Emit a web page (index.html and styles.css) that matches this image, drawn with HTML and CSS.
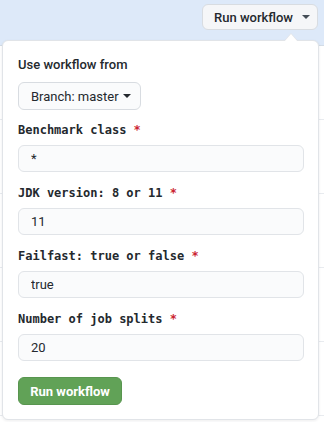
FILE: index.html
```html
<!DOCTYPE html>
<html lang="en">
  <head>
    <meta charset="UTF-8" />
    <meta name="viewport" content="width=device-width, initial-scale=1.0" />
    <title>Run workflow</title>
    <link rel="stylesheet" href="styles.css">
  </head>
  <body>
    <div class="banner">
      <button class="btn btn-run">Run workflow <span class="caret"></span></button>
    </div>

    <div class="runs">
      <div class="run-row"></div>
      <div class="run-row"></div>
      <div class="run-row"></div>
      <div class="run-row"></div>
      <div class="run-row"></div>
    </div>

    <div class="menu">
      <form class="menu-body">
        <p class="menu-title">Use workflow from</p>
        <button type="button" class="btn btn-branch">Branch: master <span class="caret"></span></button>

        <div class="field">
          <label for="benchmark">Benchmark class <span class="req">*</span></label>
          <input type="text" id="benchmark" value="*" />
        </div>

        <div class="field">
          <label for="jdk">JDK version: 8 or 11 <span class="req">*</span></label>
          <input type="text" id="jdk" value="11" />
        </div>

        <div class="field">
          <label for="failfast">Failfast: true or false <span class="req">*</span></label>
          <input type="text" id="failfast" value="true" />
        </div>

        <div class="field">
          <label for="splits">Number of job splits <span class="req">*</span></label>
          <input type="text" id="splits" value="20" />
        </div>

        <button type="button" class="btn btn-primary">Run workflow</button>
      </form>
    </div>
  </body>
</html>
```

FILE: styles.css
```css
body {
  margin: 0;
  font-family: Roboto, "Liberation Sans", Arial, sans-serif;
  font-size: 13px;
  color: #24292e;
  background: #fff;
  position: relative;
  height: 422px;
  overflow: hidden;
}
.banner {
  height: 46px;
  background-color: #dde9f9;
  border-bottom: 1px solid #d3dce6;
  display: flex;
  justify-content: flex-end;
  align-items: flex-start;
  padding: 4px 6px 0 0;
  box-sizing: border-box;
}
.run-row {
  height: 73px;
  border-bottom: 1px solid #e8ebef;
}
.btn {
  font-family: inherit;
  font-size: 13px;
  color: #24292e;
  background-color: #f5f6f8;
  border: 1px solid #d8dce1;
  border-radius: 6px;
  cursor: pointer;
  display: inline-flex;
  align-items: center;
  box-sizing: border-box;
  white-space: nowrap;
}
.btn-run {
  height: 26px;
  width: 116px;
  padding: 0 11px;
  font-weight: 500;
}
.caret {
  display: inline-block;
  width: 0;
  height: 0;
  margin-left: 4px;
  border-top: 4px solid #24292e;
  border-left: 4px solid transparent;
  border-right: 4px solid transparent;
}
.btn-run .caret {
  margin-left: 9px;
  border-top-color: #444d56;
}
.menu {
  position: absolute;
  top: 40px;
  left: 2px;
  width: 317px;
  height: 380px;
  background: #fff;
  border: 1px solid #e1e4e8;
  border-radius: 6px;
  box-sizing: border-box;
  box-shadow: 0 1px 3px rgba(27, 31, 35, 0.08);
}
.menu::before,
.menu::after {
  content: "";
  position: absolute;
  left: 281px;
  width: 0;
  height: 0;
  border-left: 7px solid transparent;
  border-right: 7px solid transparent;
}
.menu::before {
  top: -8px;
  border-bottom: 8px solid #e1e4e8;
}
.menu::after {
  top: -7px;
  border-bottom: 8px solid #fff;
}
.menu-body {
  padding: 14px 15px 0 15px;
}
.menu-title {
  margin: 0 0 7px;
  font-weight: 500;
  line-height: 20px;
}
.btn-branch {
  height: 28px;
  width: 123px;
  padding: 0 12px;
  background-color: #fafbfc;
  margin-bottom: 11px;
}
.field {
  display: flex;
  flex-direction: column;
  margin-bottom: 12px;
}
.field label {
  font-family: "DejaVu Sans Mono", "Liberation Mono", monospace;
  font-size: 12px;
  font-weight: bold;
  line-height: 18px;
  color: #24292e;
  margin: 0 0 6px;
  white-space: nowrap;
}
.req {
  color: #cb2431;
}
.field input {
  height: 27px;
  width: 286px;
  box-sizing: border-box;
  background-color: #fafbfc;
  border: 1px solid #e1e4e8;
  border-radius: 6px;
  padding: 0 12px;
  font-family: inherit;
  font-size: 13px;
  color: #24292e;
  margin: 0;
}
.btn-primary {
  margin-top: 4px;
  height: 28px;
  width: 104px;
  justify-content: center;
  color: #fff;
  font-weight: bold;
  background-color: #61a257;
  border-color: #58954f;
}
```
